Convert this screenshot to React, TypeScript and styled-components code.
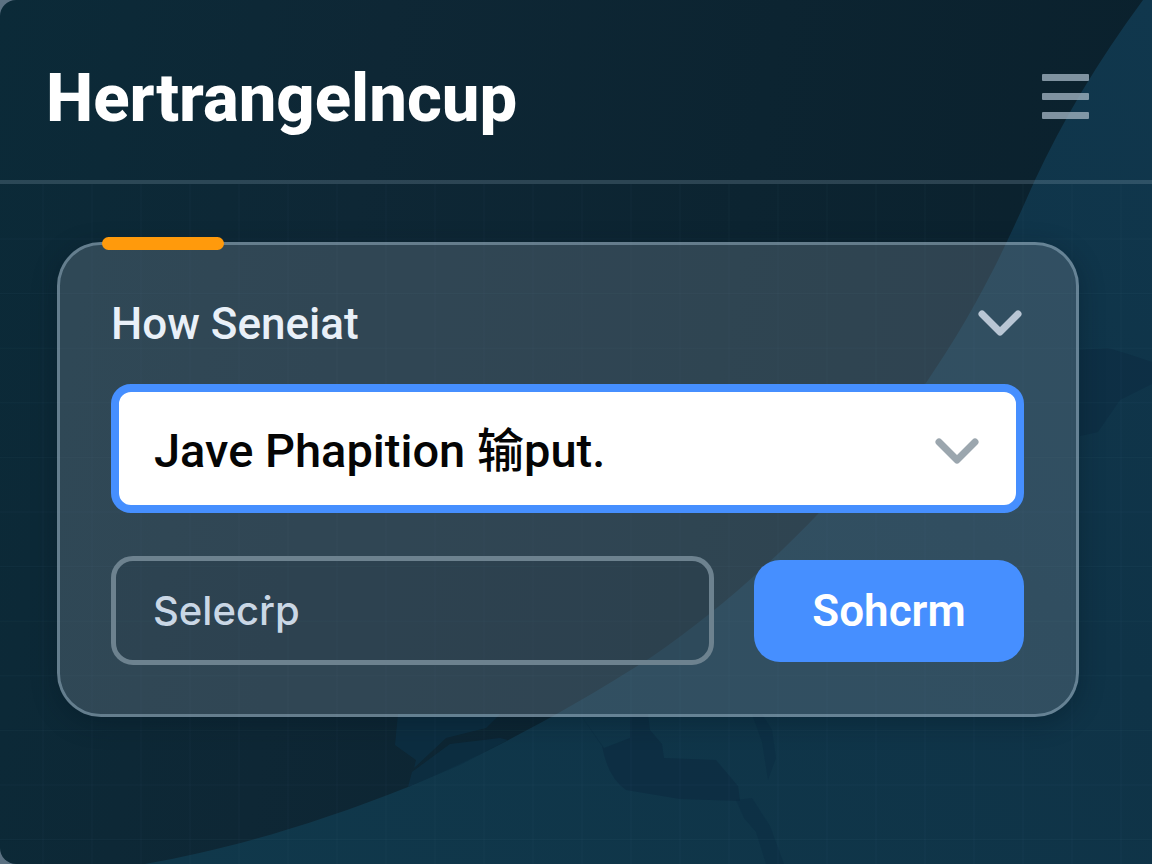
import React from "react";
import styled, { createGlobalStyle } from "styled-components";

const GlobalStyle = createGlobalStyle`
  *, *::before, *::after { box-sizing: border-box; }
  html { background: #5b7182; }
  body {
    margin: 0;
    font-family: Roboto, "Noto Sans CJK SC", "Liberation Sans", sans-serif;
    color: #ffffff;
  }
`;

const Page = styled.div`
  position: relative;
  min-height: 100vh;
  display: flex;
  flex-direction: column;
  overflow: hidden;
  border-radius: 16px 0 0 16px;
  background: linear-gradient(100deg, #0b2a38 0%, #0e2735 30%, #0c2431 60%, #0a202c 100%);
`;

const Backdrop = styled.svg`
  position: absolute;
  inset: 0;
  width: 100%;
  height: 100%;
`;

const Header = styled.header`
  position: relative;
  display: flex;
  align-items: center;
  justify-content: space-between;
  padding: 58px 63px 42px 46px;
  border-bottom: 4px solid rgba(148, 170, 190, 0.24);
`;

const Brand = styled.h1`
  margin: 0;
  font-size: 67px;
  line-height: 80px;
  font-weight: 800;
`;

const MenuButton = styled.button`
  display: flex;
  flex-direction: column;
  gap: 12px;
  width: 47px;
  padding: 0 0 4px;
  border: 0;
  background: none;
  cursor: pointer;
`;

const MenuBar = styled.span`
  height: 7px;
  border-radius: 1px;
  background: rgba(160, 178, 192, 0.78);
`;

const Main = styled.main`
  position: relative;
  flex: 1;
  padding: 58px 73px 58px 57px;
`;

const Card = styled.section`
  position: relative;
  padding: 45px 52px 49px 51px;
  border: 3px solid rgba(160, 184, 200, 0.6);
  border-radius: 44px;
  background: rgba(112, 128, 142, 0.36);
  background-clip: padding-box;
  box-shadow: 0 6px 24px rgba(4, 20, 32, 0.35);
`;

const Accent = styled.span`
  position: absolute;
  top: -8px;
  left: 42px;
  width: 122px;
  height: 13px;
  border-radius: 7px;
  background: #ff9a0c;
`;

const CardHeader = styled.div`
  display: flex;
  align-items: center;
  justify-content: space-between;
  height: 68px;
  margin-bottom: 26px;
  padding-right: 2px;
`;

const CardTitle = styled.label`
  font-size: 44px;
  line-height: 56px;
  color: #e9f0f8;
  font-weight: 500;
`;

const CollapseButton = styled.button`
  display: flex;
  padding: 0;
  border: 0;
  background: none;
  color: #b9c6d4;
  cursor: pointer;
`;

const SelectWrap = styled.div`
  position: relative;
  display: flex;
  margin-bottom: 43px;
`;

const SelectBox = styled.select`
  appearance: none;
  width: 100%;
  height: 129px;
  padding: 3px 100px 0 35px;
  border: 8px solid #468fff;
  border-radius: 20px;
  outline: none;
  background: #ffffff;
  color: #050505;
  font-family: inherit;
  font-size: 47px;
  font-weight: 500;
`;

const SelectArrow = styled.span`
  position: absolute;
  top: 54px;
  right: 45px;
  display: flex;
  color: #9ba6ae;
  pointer-events: none;
`;

const Row = styled.div`
  display: flex;
  align-items: center;
  gap: 40px;
`;

const TextBox = styled.input`
  flex: 1;
  min-width: 0;
  height: 109px;
  padding: 0 37px;
  border: 5px solid #6d828f;
  border-radius: 22px;
  outline: none;
  background: rgba(30, 48, 62, 0.16);
  color: #cad7e5;
  font-family: Inter, "Noto Sans", sans-serif;
  font-size: 40px;
  font-weight: 500;
  &::placeholder { color: #cad7e5; opacity: 1; }
`;

const SubmitButton = styled.button`
  width: 270px;
  height: 102px;
  border: 0;
  border-radius: 26px;
  background: #468fff;
  color: #ffffff;
  font-family: inherit;
  font-size: 44px;
  font-weight: 600;
  cursor: pointer;
`;

const Chevron = () => (
  <svg width="44" height="28" viewBox="0 0 44 28" fill="none" aria-hidden="true">
    <path d="M4 4 L22 22 L40 4" stroke="currentColor" strokeWidth="7" strokeLinecap="round" strokeLinejoin="round" />
  </svg>
);

const verticals = Array.from({ length: 23 }, (_, i) => 43 + i * 49);
const horizontals = Array.from({ length: 12 }, (_, i) => 239 + i * 54.6);

const Landscape = () => (
  <Backdrop viewBox="0 0 1152 864" preserveAspectRatio="none" aria-hidden="true">
    <defs>
      <linearGradient id="sea" x1="0" y1="1" x2="1" y2="0">
        <stop offset="0" stopColor="#10384b" />
        <stop offset="0.6" stopColor="#0f3347" />
        <stop offset="1" stopColor="#10374d" />
      </linearGradient>
    </defs>
    <path
      fill="url(#sea)"
      d="M1143 0 C1097 62 1062 122 1035 180 C1012 231 985 296 928 380 C860 478 760 583 650 658 C560 715 490 752 408 787 C310 826 225 850 145 864 L1152 864 L1152 0 Z"
    />
    <path
      fill="#0d3043"
      opacity="0.8"
      d="M398 714 L500 714 L486 728 L446 738 L414 768 L416 760 L395 745 Z M408 787 L412 772 L450 744 L500 738 L508 740 L460 765 Z"
    />
    <path
      fill="#0b2a40"
      opacity="0.6"
      d="M580 714 L602 746 Q608 778 626 790 L680 799 L740 801 L738 786 L716 760 L664 758 L662 744 L650 730 L648 714 L630 714 L630 738 L604 748 Z"
    />
    <path
      fill="#0b2a40"
      opacity="0.4"
      d="M736 800 L744 818 L756 832 L766 864 L784 864 L770 826 L752 798 Z M752 714 L762 742 L768 780 L776 758 L772 730 L762 714 Z"
    />
    <path
      fill="#0b2a40"
      opacity="0.5"
      d="M1080 350 L1108 348 L1134 356 L1152 362 L1152 384 L1120 400 L1098 432 L1080 436 Z"
    />
    <g stroke="#5f95a5" strokeOpacity="0.06" strokeWidth="1">
      {verticals.map((x) => <line key={x} x1={x} x2={x} y1="184" y2="864" />)}
      {horizontals.map((y) => <line key={y} x1="0" x2="1152" y1={y} y2={y} />)}
    </g>
  </Backdrop>
);

export default function App() {
  return (
    <>
      <GlobalStyle />
      <Page>
        <Landscape />
        <Header>
          <Brand>Hertrangelncup</Brand>
          <MenuButton type="button" aria-label="Menu">
            <MenuBar />
            <MenuBar />
            <MenuBar />
          </MenuButton>
        </Header>
        <Main>
          <Card>
            <Accent />
            <CardHeader>
              <CardTitle htmlFor="source">How Seneiat</CardTitle>
              <CollapseButton type="button" aria-label="Collapse">
                <Chevron />
              </CollapseButton>
            </CardHeader>
            <SelectWrap>
              <SelectBox id="source" defaultValue="input">
                <option value="input">Jave Phapition 输put.</option>
              </SelectBox>
              <SelectArrow>
                <Chevron />
              </SelectArrow>
            </SelectWrap>
            <Row>
              <TextBox type="text" placeholder="Selecṙp" aria-label="Selecṙp" />
              <SubmitButton type="button">Sohcrm</SubmitButton>
            </Row>
          </Card>
        </Main>
      </Page>
    </>
  );
}
